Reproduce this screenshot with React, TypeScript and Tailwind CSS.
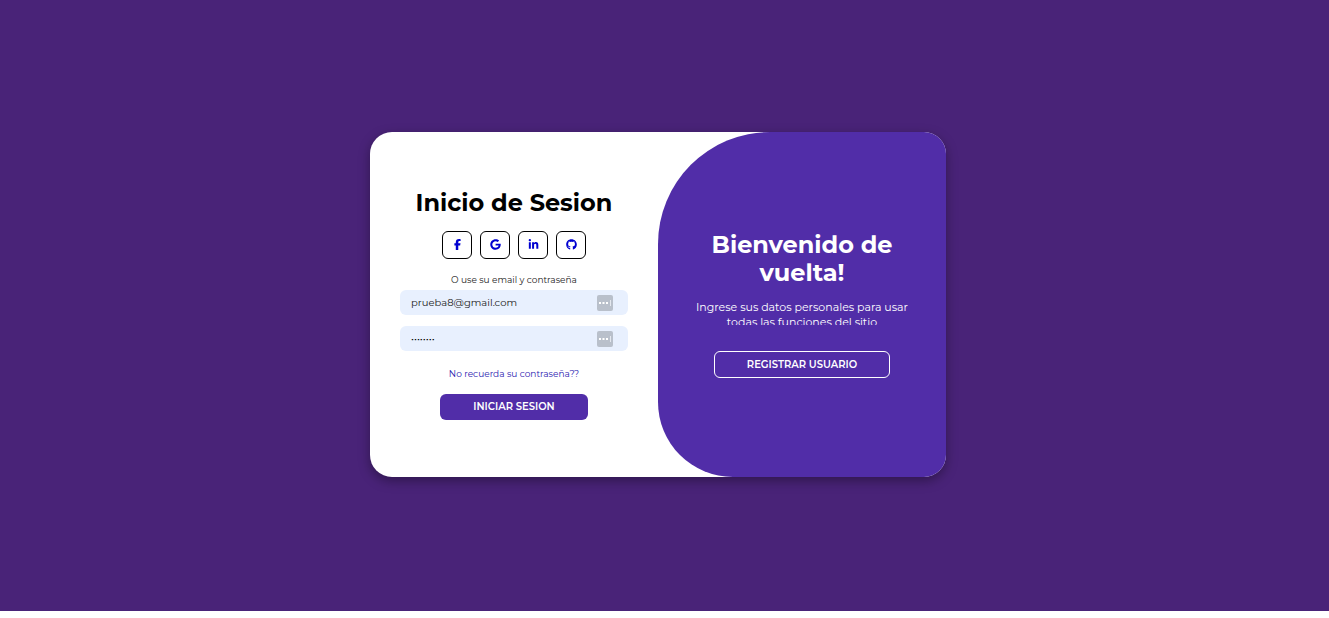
import type { ReactNode } from "react";
import { FaFacebookF, FaGithub, FaGoogle, FaLinkedinIn } from "react-icons/fa6";

const networks = [
  { name: "Facebook", icon: <FaFacebookF /> },
  { name: "Google", icon: <FaGoogle /> },
  { name: "LinkedIn", icon: <FaLinkedinIn /> },
  { name: "GitHub", icon: <FaGithub /> },
];

function PasswordManagerIcon() {
  return (
    <svg viewBox="0 0 16 16" className="size-4" aria-hidden="true">
      <rect width="16" height="16" rx="2" fill="#b9c0cb" />
      <path d="M2 7h2v2H2zM5.5 7h2v2h-2zM9 7h2v2H9z" fill="#fff" />
      <path d="M13 5h1v6h-1z" fill="#e4e8ef" />
    </svg>
  );
}

function Field({ children }: { children: ReactNode }) {
  return (
    <div className="flex h-[25px] w-full items-center rounded-md bg-[#e8f0fe] pt-px pr-[15px] pl-[11px]">
      {children}
      <PasswordManagerIcon />
    </div>
  );
}

export default function App() {
  return (
    <div className="min-h-screen bg-white pb-[7px] font-['Montserrat','Inter',sans-serif]">
      <main className="flex min-h-[611px] items-center justify-center bg-[#492378] pr-[13px] pb-0.5">
        <div className="grid min-h-[345px] w-full max-w-[576px] grid-cols-2 overflow-hidden rounded-[22px] bg-white shadow-[0_4px_12px_rgba(0,0,0,0.35)]">
          <form
            className="flex flex-col items-center justify-center px-[30px] pb-px"
            onSubmit={(event) => event.preventDefault()}
          >
            <h1 className="text-2xl leading-7 font-bold whitespace-nowrap text-black">Inicio de Sesion</h1>
            <div className="mt-3.5 flex gap-2">
              {networks.map((network) => (
                <a
                  key={network.name}
                  href="#"
                  aria-label={network.name}
                  className="flex h-7 w-[30px] items-center justify-center rounded-md border border-black text-[11px] text-[#0000d0]"
                >
                  {network.icon}
                </a>
              ))}
            </div>
            <p className="mt-3.5 mb-1 text-[9px] leading-[13px] text-[#222]">O use su email y contraseña</p>
            <div className="flex w-full flex-col gap-[11px]">
              <Field>
                <input
                  type="email"
                  aria-label="Email"
                  defaultValue="prueba8@gmail.com"
                  className="min-w-0 flex-1 bg-transparent text-[10px] text-[#222] outline-none"
                />
              </Field>
              <Field>
                <input
                  type="password"
                  aria-label="Contraseña"
                  defaultValue="prueba88"
                  className="min-w-0 flex-1 bg-transparent text-[10px] text-black outline-none"
                />
              </Field>
            </div>
            <a href="#" className="mt-4 text-[9px] leading-[13px] text-[#2a20b0]">
              No recuerda su contraseña??
            </a>
            <button
              type="submit"
              className="mt-3.5 h-[26px] w-[148px] rounded-md bg-[#512da8] text-[10px] font-semibold text-white"
            >
              INICIAR SESION
            </button>
          </form>
          <section className="flex flex-col items-center justify-center rounded-tl-[112px] rounded-bl-[75px] bg-[#512da8] px-[30px] pb-px text-center text-white">
            <h2 className="text-2xl leading-7 font-bold">Bienvenido de vuelta!</h2>
            <p className="mt-[13px] h-[25px] overflow-hidden text-[11px] leading-[15px]">
              Ingrese sus datos personales para usar todas las funciones del sitio
            </p>
            <button
              type="button"
              className="mt-[26px] h-[27px] w-44 rounded-md border border-white text-[10px] font-semibold"
            >
              REGISTRAR USUARIO
            </button>
          </section>
        </div>
      </main>
    </div>
  );
}
